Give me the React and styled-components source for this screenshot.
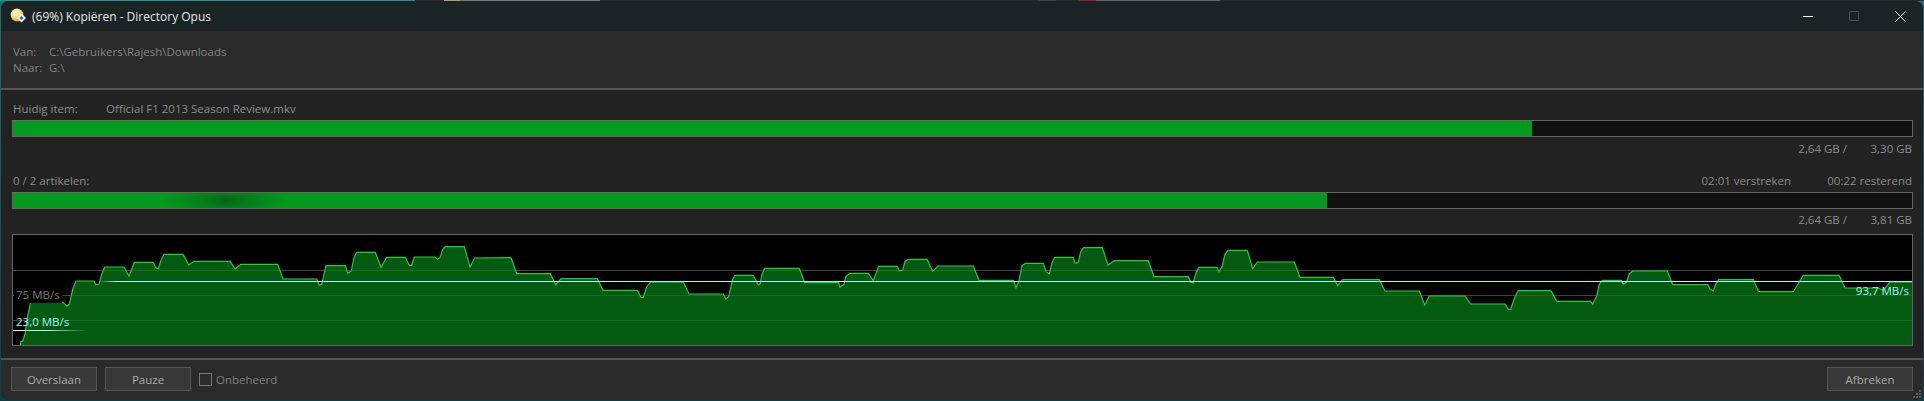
import React from "react";
import styled, { createGlobalStyle } from "styled-components";

const Global = createGlobalStyle`
  html, body { margin: 0; padding: 0; background: #17383a; overflow: hidden; }
  * { box-sizing: border-box; }
`;

const Desktop = styled.div`
  width: 1924px;
  height: 401px;
  padding: 1px;
  background:
    linear-gradient(to right,
      #2f8f88 0 415px, #2b2b2b 415px 444px, #b8a060 444px 460px, #77777a 460px 600px,
      #2b2b2b 600px 1038px, #444 1038px 1056px, #2b2b2b 1056px 1079px, #8f2030 1079px 1096px,
      #66666a 1096px 1220px, #2b2b2b 1220px) top / 100% 1px no-repeat,
    linear-gradient(to bottom, #1f6f70, #123c40);
  font-family: "Open Sans", "Noto Sans", sans-serif;
  font-size: 11.5px;
`;

const Window = styled.div`
  height: 399px;
  border-radius: 8px;
  overflow: hidden;
  display: flex;
  flex-direction: column;
  background: #222;
`;

const TitleBar = styled.div`
  height: 30px;
  flex: none;
  background: #1b2425;
  display: flex;
  align-items: center;
  padding-left: 9px;
  color: #e4e6e6;
  font-size: 12px;
`;

const TitleText = styled.span`
  margin-left: 6px;
  flex: 1;
`;

const Controls = styled.div`
  display: flex;
`;

const Control = styled.div`
  width: 46px;
  height: 30px;
  display: flex;
  align-items: center;
  justify-content: center;
`;

const Header = styled.div`
  height: 59px;
  flex: none;
  background: #2a2a2a;
  border-bottom: 2px solid #555;
  padding: 13px 12px 0;
  display: grid;
  grid-template-columns: 36px 1fr;
  grid-auto-rows: 16px;
  color: #858585;
  line-height: 16px;
`;

const Content = styled.div`
  flex: 1;
  padding: 11px 10px 0 11px;
  color: #8c8c8c;
`;

const Row = styled.div`
  height: 16px;
  line-height: 16px;
  display: flex;
  padding: 0 1px;
  margin-top: ${(p) => p.$top || 0}px;
  justify-content: ${(p) => (p.$end ? "flex-end" : "flex-start")};
`;

const ItemLabel = styled.span`
  width: 93px;
`;

const Spacer = styled.span`
  flex: 1;
`;

const StatValue = styled.span`
  width: ${(p) => p.$w}px;
  text-align: right;
`;

const Bar = styled.div`
  position: relative;
  height: 17px;
  margin-top: 3px;
  background: #111;
  border: 1px solid #666;
  overflow: hidden;
`;

const Fill = styled.div`
  height: 100%;
  background: #059a1f;
`;

const Shine = styled.div`
  position: absolute;
  top: 0;
  bottom: 0;
  left: 148px;
  width: 130px;
  background: radial-gradient(ellipse 50% 130% at 50% 50%, rgba(4, 90, 20, 0.85) 0, rgba(4, 100, 22, 0.55) 35%, rgba(5, 154, 31, 0) 100%);
`;

const Edge = styled.div`
  position: absolute;
  top: 0;
  bottom: 0;
  left: 0;
  width: 100%;
  box-shadow: inset 0 1px 0 rgba(0, 0, 0, 0);
`;

const Chart = styled.div`
  position: relative;
  height: 112px;
  margin-top: 6px;
  background: #000;
  border: 1px solid #666;
  overflow: hidden;
`;

const ChartSvg = styled.svg`
  display: block;
  width: 1899px;
  height: 110px;
`;

const Rate = styled.span`
  position: absolute;
  line-height: 16px;
  color: ${(p) => (p.$live ? "#9cf5f0" : "#777")};
  background: ${(p) => (p.$backed ? "#000" : "transparent")};
  padding: 0 2px;
  ${(p) => (p.$right ? `right: 1px;` : `left: 1px;`)}
  top: ${(p) => p.$y}px;
`;

const Footer = styled.div`
  height: 42px;
  flex: none;
  background: #2a2a2a;
  border-top: 2px solid #555;
  padding: 7px 10px 0;
  display: flex;
  align-items: flex-start;
  position: relative;
  color: #9a9a9a;
`;

const Button = styled.div`
  width: 86px;
  height: 24px;
  margin-right: 8px;
  background: #383838;
  border: 1px solid #555;
  color: #aaa;
  display: flex;
  align-items: center;
  justify-content: center;
`;

const Check = styled.div`
  display: flex;
  align-items: center;
  height: 24px;
  padding-top: 1px;
  color: #808080;
`;

const Box = styled.span`
  width: 13px;
  height: 13px;
  margin-right: 4px;
  border: 1px solid #777;
  background: #2c2c2c;
`;

const FooterSpacer = styled.div`
  flex: 1;
`;

const LastButton = styled(Button)`
  margin-right: 0;
`;

const Grip = styled.svg`
  position: absolute;
  right: 1px;
  bottom: 1px;
`;

const SEGMENTS = [
  [0, [[62,342],[62,332],[68,330],[75,310],[84,250],[92,214],[190,214],[200,226],[208,220],[218,175],[228,150],[282,150],[287,161],[297,160],[305,130],[314,108],[372,108],[387,135],[403,94],[460,94],[467,110],[475,114],[482,90],[492,70],[549,70],[566,102],[582,91],[690,91],[706,114],[722,100],[833,100],[849,144],[950,144],[958,163],[965,160],[978,104],[1036,104],[1043,127],[1054,120],[1062,80],[1070,64],[1126,64],[1143,109],[1160,79],[1216,79],[1228,103],[1235,103],[1243,78],[1305,78],[1312,85],[1320,80],[1328,55],[1336,47],[1393,47],[1410,108],[1424,81]]],
  [480, [[93,80],[110,128],[211,128],[227,162],[243,143],[352,143],[369,178],[472,178],[483,199],[490,199],[500,168],[512,153],[610,153],[627,189],[730,189],[738,204],[746,197],[758,145],[765,133],[820,133],[835,162],[840,160],[846,130],[854,112],[958,112],[974,155],[1076,155],[1080,169],[1092,160],[1098,136],[1110,127],[1165,127],[1180,149],[1196,106],[1252,106],[1258,120],[1268,117],[1275,92],[1284,85],[1341,85],[1358,121],[1374,105],[1480,105]]],
  [960, [[57,148],[160,148],[168,170],[177,150],[186,104],[197,97],[250,97],[258,122],[268,129],[276,95],[284,79],[340,79],[345,96],[355,95],[362,62],[371,50],[427,50],[444,102],[464,89],[565,89],[582,137],[685,137],[692,153],[700,156],[708,125],[717,109],[771,109],[777,123],[787,105],[795,70],[804,58],[862,58],[878,113],[892,93],[1003,93],[1020,139],[1120,139],[1133,164],[1148,146],[1258,146],[1275,180],[1378,180],[1394,222],[1408,195]]],
  [1440, [[75,195],[92,219],[195,219],[205,235],[212,235],[225,197],[235,179],[333,179],[350,211],[452,211],[458,220],[470,195],[478,160],[488,148],[543,148],[550,160],[560,153],[568,128],[578,120],[682,120],[698,161],[803,161],[810,175],[820,180],[827,160],[836,146],[940,146],[956,182],[1060,182],[1090,133],[1197,133],[1215,171],[1315,171],[1330,178],[1350,153],[1418,153]]],
];

const points = SEGMENTS.flatMap(([off, pts]) =>
  pts.map(([x, y]) => [+(off + x / 3).toFixed(1), +(230 + y / 3).toFixed(1)])
);
const line = points.map((p) => p.join(",")).join(" ");
const area = `20.7,344 ${line} 1913,344`;

function App() {
  return (
    <>
      <Global />
      <Desktop>
        <Window>
          <TitleBar>
            <svg width="16" height="16" viewBox="0 0 16 16">
              <defs>
                <radialGradient id="ball" cx="35%" cy="30%" r="75%">
                  <stop offset="0" stopColor="#fffdf0" />
                  <stop offset="0.5" stopColor="#f8dc78" />
                  <stop offset="1" stopColor="#d99a20" />
                </radialGradient>
              </defs>
              <circle cx="7" cy="7" r="6.4" fill="url(#ball)" />
              <path d="M11.5 5.5 16 10l-4.5 4.5L7 10z" fill="#f2f2fa" />
              <path d="M11.5 8 13.5 10l-2 2-2-2z" fill="#4a50b8" />
            </svg>
            <TitleText>(69%) Kopiëren - Directory Opus</TitleText>
            <Controls>
              <Control>
                <svg width="10" height="10" viewBox="0 0 10 10"><path d="M0 5.5h10" stroke="#fff" strokeWidth="1" /></svg>
              </Control>
              <Control>
                <svg width="10" height="10" viewBox="0 0 10 10"><rect x="0.5" y="0.5" width="9" height="9" rx="0.5" fill="none" stroke="#4a4f50" /></svg>
              </Control>
              <Control>
                <svg width="11" height="11" viewBox="0 0 11 11"><path d="M.5.5l10 10M10.5.5l-10 10" stroke="#fff" strokeWidth="1" /></svg>
              </Control>
            </Controls>
          </TitleBar>
          <Header>
            <span>Van:</span>
            <span>C:\Gebruikers\Rajesh\Downloads</span>
            <span>Naar:</span>
            <span>G:\</span>
          </Header>
          <Content>
            <Row>
              <ItemLabel>Huidig item:</ItemLabel>
              <span>Official F1 2013 Season Review.mkv</span>
            </Row>
            <Bar>
              <Fill style={{ width: "80%" }} />
            </Bar>
            <Row $end $top={4}>
              <span>2,64 GB /</span>
              <StatValue $w={65}>3,30 GB</StatValue>
            </Row>
            <Row $top={16}>
              <span>0 / 2 artikelen:</span>
              <Spacer />
              <span>02:01 verstreken</span>
              <StatValue $w={121}>00:22 resterend</StatValue>
            </Row>
            <Bar>
              <Fill style={{ width: "69.2%" }} />
              <Shine />
              <Edge />
            </Bar>
            <Row $end $top={3}>
              <span>2,64 GB /</span>
              <StatValue $w={65}>3,81 GB</StatValue>
            </Row>
            <Chart>
              <ChartSvg viewBox="13 234 1899 110">
                <defs>
                  <linearGradient id="rateIn" gradientUnits="userSpaceOnUse" x1="98" x2="116" y1="0" y2="0">
                    <stop offset="0" stopColor="#9ffbf5" stopOpacity="0" />
                    <stop offset="1" stopColor="#9ffbf5" />
                  </linearGradient>
                  <linearGradient id="rateOut" gradientUnits="userSpaceOnUse" x1="45" x2="88" y1="0" y2="0">
                    <stop offset="0" stopColor="#c8fffb" />
                    <stop offset="1" stopColor="#9ffbf5" stopOpacity="0" />
                  </linearGradient>
                </defs>
                <path d="M13 269.5H1912M13 294.5H1912M13 319.5H1912" stroke="#404040" strokeWidth="1" />
                <polygon points={area} fill="#068018" fillOpacity="0.7" />
                <polyline points={line} fill="none" stroke="#2cc544" strokeWidth="1.2" />
                <rect x="98" y="280" width="1814" height="1" fill="url(#rateIn)" />
                <rect x="13" y="329" width="75" height="1" fill="url(#rateOut)" />
              </ChartSvg>
              <Rate $backed $y={52}>75 MB/s</Rate>
              <Rate $live $y={79}>23,0 MB/s</Rate>
              <Rate $live $right $y={48}>93,7 MB/s</Rate>
            </Chart>
          </Content>
          <Footer>
            <Button>Overslaan</Button>
            <Button>Pauze</Button>
            <Check>
              <Box />
              Onbeheerd
            </Check>
            <FooterSpacer />
            <LastButton>Afbreken</LastButton>
            <Grip width="9" height="9" viewBox="0 0 9 9">
              <path d="M6 0h2v2H6zM3 3h2v2H3zM6 3h2v2H6zM0 6h2v2H0zM3 6h2v2H3zM6 6h2v2H6z" fill="#5f5f5f" />
            </Grip>
          </Footer>
        </Window>
      </Desktop>
    </>
  );
}

export default App;
